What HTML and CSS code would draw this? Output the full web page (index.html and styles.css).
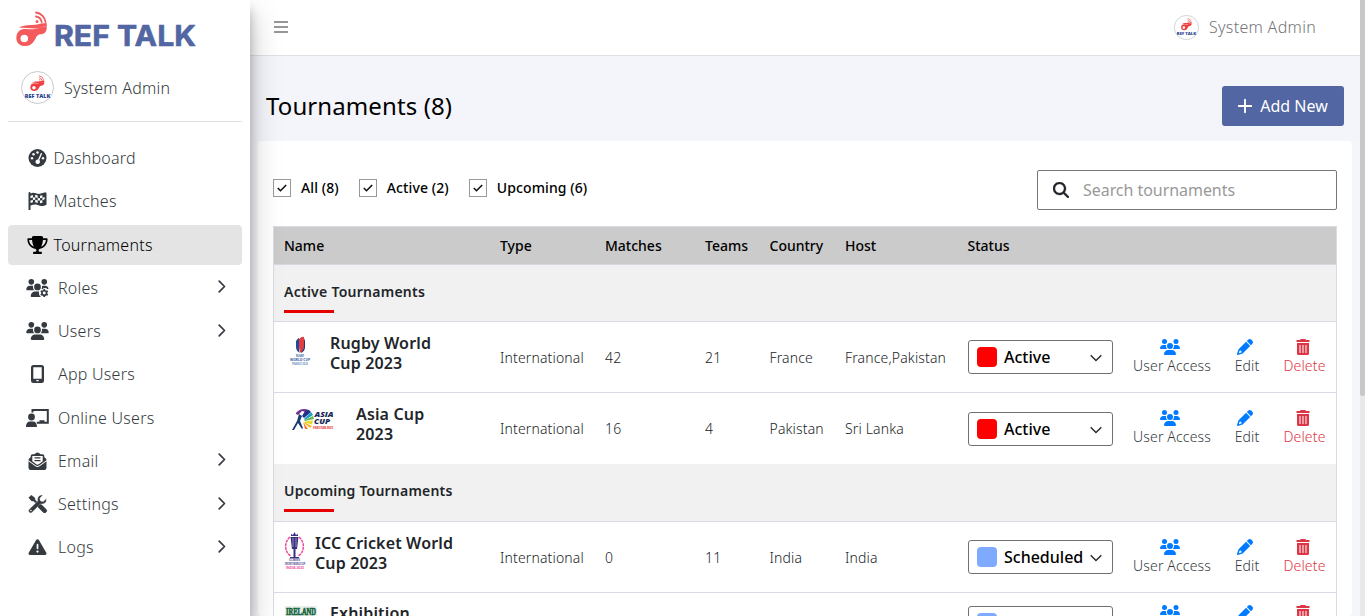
FILE: index.html
```html
<!DOCTYPE html>
<html lang="en">
<head>
<meta charset="utf-8">
<title>Ref Talk - Tournaments</title>
<link rel="stylesheet" href="styles.css">
</head>
<body>
<svg class="sprite" aria-hidden="true">
  <symbol id="whistle" viewBox="0 0 32 37">
    <path d="M3 16.500C8 13.500 15 14.500 21 13.500c3-.5 5-1.500 9.500-1.500l.5 3C25 16 24 17.500 19 17.500 13 17.500 8 16.500 3 16.500z"/>
    <path fill-rule="evenodd" d="M.5 25.500c.5-5.500 4.500-8 10-7.500 6 .6 10 .2 14-1.500l6-1.500c.8 3.500-.5 7-4 8-2.500.5-4 0-6 2.500-2 4.500-4.500 9-10.500 9.500C3.500 35.500-.5 31 .5 25.500zm4 2a3.800 3.800 0 1 0 7.600 0 3.800 3.800 0 1 0-7.600 0z"/>
    <g fill="none" stroke="#f4595b" stroke-width="1.800" stroke-linecap="round"><path d="M20 1.500a11 11 0 0 1 9.500 9.500M20 5.500a7 7 0 0 1 5.700 5.700"/></g>
    <circle cx="21" cy="10.500" r="1.500"/>
  </symbol>
  <symbol id="avatar" viewBox="0 0 33 33">
    <circle cx="16.500" cy="16.500" r="16" fill="#fff" stroke="#c5c8cc"/>
    <use href="#whistle" x="9" y="4" width="15" height="17" fill="#ef3e3e"/>
    <text x="3.800" y="27" textLength="25.500" lengthAdjust="spacingAndGlyphs" font-family="Open Sans, sans-serif" font-weight="800" font-size="5.500" fill="#29418f">REF TALK</text>
  </symbol>
  <symbol id="users" viewBox="0 0 640 512"><path d="M144 0a80 80 0 1 1 0 160A80 80 0 1 1 144 0zM512 0a80 80 0 1 1 0 160A80 80 0 1 1 512 0zM0 298.700C0 239.800 47.800 192 106.700 192h42.700c15.900 0 31 3.500 44.600 9.700c-1.300 7.200-1.900 14.700-1.900 22.300c0 38.200 16.800 72.500 43.300 96H21.300C9.600 320 0 310.400 0 298.700zM405.300 320c26-23.500 42.600-57.800 42.600-96c0-7.600-.7-15-1.900-22.300c13.600-6.300 28.700-9.700 44.600-9.700h42.700C592.200 192 640 239.800 640 298.700c0 11.800-9.600 21.300-21.300 21.300H405.300zM224 224a96 96 0 1 1 192 0 96 96 0 1 1-192 0zM128 485.300C128 411.700 187.700 352 261.300 352H378.700C452.300 352 512 411.700 512 485.300c0 14.700-11.900 26.700-26.700 26.700H154.700c-14.700 0-26.700-11.900-26.700-26.700z"/></symbol>
  <symbol id="users-gear" viewBox="0 0 640 512"><path d="M144 0a80 80 0 1 1 0 160A80 80 0 1 1 144 0zM512 0a80 80 0 1 1 0 160A80 80 0 1 1 512 0zM0 298.700C0 239.800 47.800 192 106.700 192h42.700c15.900 0 31 3.500 44.600 9.700c-1.300 7.200-1.900 14.700-1.900 22.300c0 38.200 16.800 72.500 43.300 96H21.300C9.600 320 0 310.400 0 298.700zM435 280c20-26 15-60 11-78c14-6 29-10 45-10h43c50 0 91 34 103 79l-30 18c-40-45-110-45-150 0zM224 224a96 96 0 1 1 192 0 96 96 0 1 1-192 0zM128 485c0-74 60-133 133-133H365c-15 60 5 120 55 160H155c-15 0-27-12-27-27z"/><circle cx="512" cy="400" r="63" fill="none" stroke="currentColor" stroke-width="52"/><path d="M512 284v232M412 342l200 116M412 458l200-116" fill="none" stroke="currentColor" stroke-width="48"/><circle cx="512" cy="400" r="42" fill="#fff"/></symbol>
  <symbol id="trophy" viewBox="0 0 576 512"><path d="M400 0H176c-26.500 0-48.100 21.800-47.100 48.200c.2 5.300.4 10.600.7 15.800H24C10.700 64 0 74.700 0 88c0 92.600 33.500 157 78.500 200.700c44.300 43.100 98.300 64.800 138.100 75.800c23.400 6.500 39.400 26 39.400 45.600c0 20.900-17 37.900-37.900 37.900H192c-17.700 0-32 14.300-32 32s14.300 32 32 32H384c17.700 0 32-14.300 32-32s-14.300-32-32-32H357.900C337 448 320 431 320 410.100c0-19.600 15.900-39.200 39.400-45.600c39.900-11 93.900-32.700 138.200-75.800C542.500 245 576 180.600 576 88c0-13.300-10.700-24-24-24H446.400c.3-5.200.5-10.400.7-15.800C448.100 21.800 426.500 0 400 0zM48.900 112h84.400c9.100 90.100 29.200 150.300 51.900 190.600c-24.900-11-50.800-26.500-73.200-48.300c-32-31.100-58-76-63-142.300zM464.100 254.300c-22.400 21.800-48.300 37.300-73.200 48.300c22.700-40.300 42.800-100.500 51.900-190.600h84.400c-5.100 66.300-31.100 111.200-63 142.300z"/></symbol>
  <symbol id="gauge" viewBox="0 0 18 18"><circle cx="9" cy="9" r="9"/><g fill="#fff"><circle cx="3.500" cy="9.300" r="1.200"/><circle cx="5" cy="5.200" r="1.200"/><circle cx="9" cy="3.500" r="1.200"/><circle cx="14.500" cy="9.300" r="1.200"/><path d="M12.300 4.200a.7.700 0 0 1 1.200.6L10.800 11a2.300 2.300 0 1 1-1.300-.6z"/></g></symbol>
  <symbol id="flag" viewBox="0 0 18 18"><path fill-rule="evenodd" d="M0 1a1 1 0 0 1 2 0v.5C6-.5 8 2.500 11.500 1.800 14 1.200 16.500.2 18 .8v11.900c-4 2.200-6.500 1-9 .2-2.500-.9-4.500-.2-7 .7V18H0zM2 3.700v2.500l2.400-.7V3zm4.700-.9v2.400l2.500.8V3.500zm4.800 1v2.500l2.400-.6V3.300zM4.400 5.500V8l2.300-.2V5.200zM9.200 6v2.500h2.300V6.300zm4.700-.3v2.500l2.200-.9V4.900zM2 8.500V11l2.400-.8V8zm4.700-.7v2.400l2.500.7V8.500zm4.800.7v2.700l2.400-.4V8.200z"/></symbol>
  <symbol id="mobile" viewBox="0 0 14 18"><path fill-rule="evenodd" d="M3 0h8a2.500 2.500 0 0 1 2.500 2.500v13A2.500 2.500 0 0 1 11 18H3a2.500 2.500 0 0 1-2.500-2.500v-13A2.500 2.500 0 0 1 3 0zm-.2 2.200v11.500h8.400V2.200zm3 12.700v1.400h2.400v-1.400z"/></symbol>
  <symbol id="board" viewBox="0 0 23 18"><path d="M6.500 3.500V1h15.300v12.800h-11" fill="none" stroke="currentColor" stroke-width="2"/><circle cx="5.500" cy="8" r="3.400"/><path d="M0 18c0-4 2-5.500 4-5.500h3c2.500 0 4 2 4 5.500zM13.500 11.300h5v2.500h-5z"/></symbol>
  <symbol id="mail" viewBox="0 0 18 18"><path fill-rule="evenodd" d="M0 8.200c0-1 .4-1.700 1.200-2.200l1-.7V4c0-1 .8-1.800 1.800-1.800h2L7.500 1a2.500 2.500 0 0 1 3 0L12 2.200h2c1 0 1.800.8 1.800 1.800v1.300l1 .7c.8.500 1.200 1.200 1.200 2.200l-7 5.100a3.400 3.400 0 0 1-4 0zM3.800 4v5.200l4 3a2 2 0 0 0 2.400 0l4-3V4z"/><path d="M6 5.300h6v1.300H6zM6 7.900h6v1.300H6zM0 9.200l6.500 4.900a4 4 0 0 0 5 0L18 9.200v6.600a2.200 2.200 0 0 1-2.200 2.200H2.200A2.200 2.200 0 0 1 0 15.800z"/></symbol>
  <symbol id="tools" viewBox="0 0 18 18"><path d="M.3 2.700L2.700.3l3.500 2.500.3 2 4.700 4.700 1.300-.2 5 5a1.700 1.700 0 0 1-2.800 2.800l-5-5 .1-1.400-4.700-4.600-2-.2z" stroke="currentColor" stroke-width=".5"/><path d="M17.700 3.600l-3 3-2.700-.7-.7-2.700 3-3C10.500-.8 8.300 3 9.200 5.900L.7 14.300a2.100 2.100 0 0 0 3 3l8.400-8.400c3 .9 6.700-1.300 5.600-5.300z" stroke="#fff" stroke-width=".4"/><path d="M9.800 10.400l2.700-1 5 5a1.700 1.700 0 0 1-2.800 2.800l-5-5z"/><circle cx="2.400" cy="15.500" r=".8" fill="#fff"/></symbol>
  <symbol id="warn" viewBox="0 0 512 512"><path fill-rule="evenodd" d="M256 32c14.200 0 27.300 7.500 34.500 19.800l216 368c7.300 12.400 7.300 27.700.2 40.100S486.300 480 472 480H40c-14.300 0-27.600-7.700-34.700-20.100s-7-27.800.2-40.100l216-368C228.700 39.500 241.800 32 256 32zm0 128c-13.300 0-24 10.700-24 24V296c0 13.300 10.700 24 24 24s24-10.700 24-24V184c0-13.300-10.700-24-24-24zm32 224a32 32 0 1 0-64 0 32 32 0 1 0 64 0z"/></symbol>
  <symbol id="right" viewBox="0 0 8 13"><path d="M1.200 1.200l5.300 5.300-5.300 5.300" fill="none" stroke="currentColor" stroke-width="1.700" stroke-linecap="round" stroke-linejoin="round"/></symbol>
  <symbol id="down" viewBox="0 0 12 8"><path d="M.7 1.200L6 6.500l5.300-5.300" fill="none" stroke="#212529" stroke-width="1.300"/></symbol>
  <symbol id="pencil" viewBox="0 0 512 512"><path d="M362.700 19.300L314.300 67.700 444.300 197.700l48.400-48.400c25-25 25-65.500 0-90.500L453.300 19.300c-25-25-65.500-25-90.500 0zM291.700 90.300L58.600 323.500c-10.400 10.400-18 23.300-22.200 37.400L1 481.200C-1.500 489.700.8 498.800 7 505s15.300 8.500 23.700 6.100l120.300-35.400c14.100-4.200 27-11.800 37.400-22.200L421.700 220.300zM59.400 452l23-78.100L112 352v32c0 8.800 7.200 16 16 16h32l-22.400 29.600z" fill-rule="evenodd"/></symbol>
  <symbol id="trash" viewBox="0 0 14 16"><path fill-rule="evenodd" d="M4.200.5L5 0h4l.8.500.3.5H13.500v2H.5V1h3.400zM1 4h12v10.500a1.500 1.500 0 0 1-1.500 1.500h-9A1.500 1.500 0 0 1 1 14.500zm2.500 2v8h1V6zm3 0v8h1V6zm3 0v8h1V6z"/></symbol>
  <symbol id="search" viewBox="0 0 512 512"><path fill-rule="evenodd" d="M416 208c0 45.900-14.900 88.300-40 122.700L502.600 457.400c12.500 12.500 12.500 32.800 0 45.300s-32.800 12.500-45.300 0L330.700 376c-34.400 25.200-76.800 40-122.700 40C93.100 416 0 322.900 0 208S93.100 0 208 0S416 93.100 416 208zM208 352a144 144 0 1 0 0-288 144 144 0 1 0 0 288z" stroke="currentColor" stroke-width="10"/></symbol>
</svg>

<div class="app">
  <aside class="sidebar">
    <div class="brand">
      <svg class="brand-logo" viewBox="0 0 184 40">
        <use href="#whistle" x="0" y="0" width="32" height="37" fill="#f4595b"/>
        <text class="wordmark" x="38" y="35" textLength="142" lengthAdjust="spacingAndGlyphs">REF TALK</text>
      </svg>
    </div>
    <div class="profile"><svg class="face"><use href="#avatar"/></svg><span>System Admin</span></div>
    <nav class="menu">
      <a class="item tight"><svg class="ico"><use href="#gauge"/></svg><span>Dashboard</span></a>
      <a class="item tight"><svg class="ico"><use href="#flag"/></svg><span>Matches</span></a>
      <a class="item tight active"><svg class="ico"><use href="#trophy"/></svg><span>Tournaments</span></a>
      <a class="item"><svg class="ico"><use href="#users-gear"/></svg><span>Roles</span><svg class="arrow"><use href="#right"/></svg></a>
      <a class="item"><svg class="ico"><use href="#users"/></svg><span>Users</span><svg class="arrow"><use href="#right"/></svg></a>
      <a class="item"><svg class="ico"><use href="#mobile"/></svg><span>App Users</span></a>
      <a class="item"><svg class="ico"><use href="#board"/></svg><span>Online Users</span></a>
      <a class="item"><svg class="ico"><use href="#mail"/></svg><span>Email</span><svg class="arrow"><use href="#right"/></svg></a>
      <a class="item"><svg class="ico"><use href="#tools"/></svg><span>Settings</span><svg class="arrow"><use href="#right"/></svg></a>
      <a class="item"><svg class="ico"><use href="#warn"/></svg><span>Logs</span><svg class="arrow"><use href="#right"/></svg></a>
    </nav>
  </aside>

  <div class="page">
    <header class="topbar">
      <svg class="burger" viewBox="0 0 14 12"><path d="M0 1h14M0 6h14M0 11h14" stroke="#737578" stroke-width="1.600"/></svg>
      <div class="account"><svg class="face small"><use href="#avatar"/></svg><span>System Admin</span></div>
    </header>
    <div class="heading">
      <h1>Tournaments (8)</h1>
      <button class="add"><svg viewBox="0 0 14 14"><path d="M7 .8v12.400M.8 7h12.400" stroke="#fff" stroke-width="1.900" stroke-linecap="round"/></svg>Add New</button>
    </div>
    <main class="panel">
      <div class="toolbar">
        <div class="filters">
          <label><i class="box"><svg viewBox="0 0 10 8"><path d="M.8 4l2.700 2.700L9.200 1" fill="none" stroke="#111" stroke-width="1.600"/></svg></i>All (8)</label>
          <label><i class="box"><svg viewBox="0 0 10 8"><path d="M.8 4l2.700 2.700L9.200 1" fill="none" stroke="#111" stroke-width="1.600"/></svg></i>Active (2)</label>
          <label><i class="box"><svg viewBox="0 0 10 8"><path d="M.8 4l2.700 2.700L9.200 1" fill="none" stroke="#111" stroke-width="1.600"/></svg></i>Upcoming (6)</label>
        </div>
        <div class="search"><svg><use href="#search"/></svg><span>Search tournaments</span></div>
      </div>

      <div class="table">
        <div class="row head"><span>Name</span><span>Type</span><span>Matches</span><span>Teams</span><span>Country</span><span>Host</span><span>Status</span></div>
        <div class="group"><b>Active Tournaments</b></div>
        <div class="row">
          <div class="name">
            <svg class="crest rugby" viewBox="0 0 32 32">
              <path d="M12 5q2-3 3-3v11q0 4 2 4-5-1-5-6z" fill="#24499a"/><path d="M15 3q3-3 5-2v8q0 5-3 8-2-2-2-6z" fill="#e43d3d"/><path d="M20 2l1 3v6q0 4-4 6 3-4 3-8z" fill="#24356f"/>
              <g font-family="Open Sans, sans-serif" font-weight="700" fill="#315b9d" text-anchor="middle"><text x="16" y="20.800" font-size="3" textLength="8" lengthAdjust="spacingAndGlyphs">RUGBY</text><text x="16" y="25" font-size="3" textLength="20" lengthAdjust="spacingAndGlyphs">WORLD CUP</text><text x="16" y="29.200" font-size="3" fill="#6b91c0" textLength="16" lengthAdjust="spacingAndGlyphs">FRANCE 2023</text></g>
            </svg>
            <h2>Rugby World<br>Cup 2023</h2>
          </div>
          <span>International</span><span>42</span><span>21</span><span>France</span><span>France,Pakistan</span>
          <div class="status"><i class="dot red"></i><b>Active</b><svg><use href="#down"/></svg></div>
          <div class="actions"><a><svg class="w20"><use href="#users"/></svg>User Access</a><a><svg><use href="#pencil"/></svg>Edit</a><a class="del"><svg><use href="#trash"/></svg>Delete</a></div>
        </div>
        <div class="row no-line">
          <div class="name">
            <svg class="crest asia" viewBox="0 0 46 24">
              <path d="M4 5q5-6 13-3l-3 2-4-1-4 4-2-1z" fill="#71318c"/><path d="M7 6l3 2-2 5 3 7-1 1-4-6-4 7H0l5-9z" fill="#173c70"/><path d="M10 8l3-5 4-1 2 2-7 6z" fill="#25308b"/><path d="M12 11l7-7 2 3-8 5z" fill="#1ba0c8"/><path d="M12 12.500l9-4.500 1 3-9 2z" fill="#67b84c"/><path d="M13 13.500l8-1-1 4-7-2z" fill="#e4d92f"/><path d="M12 14l8 4-2 2-6-5z" fill="#fdb827"/><path d="M11 14l5 7-3 0z" fill="#f47b30"/>
              <g font-family="Open Sans, sans-serif" font-weight="800" font-style="italic" fill="#152755"><text x="22.500" y="8.500" font-size="7.500" textLength="19" lengthAdjust="spacingAndGlyphs">ASIA</text><text x="22" y="16" font-size="7.500" textLength="16" lengthAdjust="spacingAndGlyphs">CUP</text><text x="21" y="20.500" font-size="2.800" fill="#e64a4a" textLength="20" lengthAdjust="spacingAndGlyphs">PAKISTAN 2023</text></g>
            </svg>
            <h2>Asia Cup<br>2023</h2>
          </div>
          <span>International</span><span>16</span><span>4</span><span>Pakistan</span><span>Sri Lanka</span>
          <div class="status low"><i class="dot red"></i><b>Active</b><svg><use href="#down"/></svg></div>
          <div class="actions"><a><svg class="w20"><use href="#users"/></svg>User Access</a><a><svg><use href="#pencil"/></svg>Edit</a><a class="del"><svg><use href="#trash"/></svg>Delete</a></div>
        </div>
        <div class="group second"><b>Upcoming Tournaments</b></div>
        <div class="row">
          <div class="name">
            <svg class="crest icc" viewBox="0 0 22 38">
              <path d="M6 5C0 10 0 20 7 24M15 5c6 5 6 15-1 19" fill="none" stroke="#ee4b9b" stroke-width="1.500" stroke-dasharray="3 .7"/><path d="M7 4V2l2 1 1.500-3L12 3l2-1v2zM6.500 5h8l-1.500 12h-1.500v8h-2v-8H8z" fill="#39317f"/><path d="M9 6v9M12 6v9" stroke="#b4a7d1" stroke-width=".8"/><path d="M6 25h9v1.200H6z" fill="#39317f"/>
              <g font-family="Open Sans, sans-serif" font-weight="700" font-size="2.700" text-anchor="middle" fill="#39317f"><text x="10.500" y="29.300" textLength="11" lengthAdjust="spacingAndGlyphs">ICC MEN'S</text><text x="11" y="32.900" textLength="20.500" lengthAdjust="spacingAndGlyphs">CRICKET WORLD CUP</text><text x="11" y="36.700" textLength="18" lengthAdjust="spacingAndGlyphs" fill="#ee4b9b">INDIA 2023</text></g>
            </svg>
            <h2>ICC Cricket World<br>Cup 2023</h2>
          </div>
          <span>International</span><span>0</span><span>11</span><span>India</span><span>India</span>
          <div class="status"><i class="dot blue"></i><b>Scheduled</b><svg><use href="#down"/></svg></div>
          <div class="actions"><a><svg class="w20"><use href="#users"/></svg>User Access</a><a><svg><use href="#pencil"/></svg>Edit</a><a class="del"><svg><use href="#trash"/></svg>Delete</a></div>
        </div>
        <div class="row last">
          <div class="name">
            <svg class="crest ireland" viewBox="0 0 32 32"><path d="M0 0h32v32H0z" fill="#e8efe9"/><text x="1" y="8.500" font-family="Liberation Serif, serif" font-weight="700" font-size="11" textLength="30" lengthAdjust="spacingAndGlyphs" fill="#14633d" stroke="#14633d" stroke-width=".7">IRELAND</text></svg>
            <h2>Exhibition</h2>
          </div>
          <span></span><span></span><span></span><span></span><span></span>
          <div class="status"><i class="dot blue"></i><svg><use href="#down"/></svg></div>
          <div class="actions"><a><svg class="w20"><use href="#users"/></svg></a><a><svg><use href="#pencil"/></svg></a><a class="del"><svg><use href="#trash"/></svg></a></div>
        </div>
      </div>
    </main>
  </div>
  <div class="scroll"><div class="thumb"></div></div>
</div>
</body>
</html>
```

FILE: styles.css
```css
* { box-sizing: border-box; }
body { margin: 0; overflow: hidden; font: 300 14px/21px "Noto Sans", sans-serif; letter-spacing: .15px; color: #212529; background: #f4f6f9; }
svg { display: block; fill: currentColor; flex: none; overflow: visible; letter-spacing: 0; }
.sprite { display: none; }
.app { display: flex; height: 616px; overflow: hidden; }

.sidebar { flex: none; width: 250px; padding: 0 8px; background: #fff; box-shadow: 0 14px 28px rgba(0,0,0,.25), 0 10px 10px rgba(0,0,0,.22); z-index: 2; color: #343a40; font-size: 16px; line-height: 24px; letter-spacing: .25px; }
.brand { height: 60px; padding: 11px 0 0 8px; }
.brand-logo { width: 184px; height: 40px; }
.wordmark { font: 700 29px/30px "Inter", sans-serif; fill: #5166a2; stroke: #5166a2; stroke-width: .6px; stroke-linejoin: round; }
.profile { display: flex; align-items: center; gap: 10px; height: 62px; padding: 0 0 6px 13px; border-bottom: 1px solid #dee2e6; }
.face { width: 33px; height: 33px; }
.face.small { width: 25px; height: 25px; }
.menu { padding-top: 16px; }
.item { display: flex; align-items: center; height: 40px; margin-bottom: 3.250px; padding: 0 16px 0 18px; border-radius: 4px; }
.ico { width: 23px; height: 18px; margin-right: 9px; }
.tight .ico { margin-right: 4.500px; }
.active { background: #e4e4e4; color: #000; }
.arrow { width: 8px; height: 13px; margin-left: auto; margin-bottom: 2px; }

.page { flex: 1; min-width: 0; display: flex; flex-direction: column; }
.topbar { flex: none; height: 56px; padding: 0 44px 1px 24px; display: flex; align-items: center; justify-content: space-between; background: #fff; border-bottom: 1px solid #dee2e6; }
.burger { width: 14px; height: 12px; }
.account { display: flex; align-items: center; gap: 10px; font-size: 16px; letter-spacing: .3px; color: #737578; }
.heading { flex: none; height: 85px; padding: 15px 16px 0 16px; display: flex; align-items: center; justify-content: space-between; background: #f4f5fa; }
h1 { margin: 0; font-size: 24px; line-height: 30px; font-weight: 400; letter-spacing: .1px; color: #000; }
.add { display: flex; align-items: center; justify-content: center; gap: 8px; width: 122px; height: 40px; border: 0; border-radius: 3px; background: #5166a2; color: #fff; font: 400 16px "Noto Sans", sans-serif; }
.add svg { width: 14px; height: 14px; }

.panel { flex: 1; min-height: 0; margin: 0 8px; padding: 29px 15px 0; background: #fff; border-radius: 4px; }
.toolbar { display: flex; justify-content: space-between; height: 56px; }
.filters { display: flex; gap: 20px; padding-top: 7px; font-weight: 500; letter-spacing: .1px; color: #000; }
.filters label { display: flex; gap: 10px; height: 21px; align-items: center; }
.box { width: 18px; height: 18px; border: 1px solid #999; display: grid; place-items: center; }
.box svg { width: 10px; height: 8px; }
.search { display: flex; align-items: center; gap: 14px; width: 300px; height: 40px; padding-left: 15px; border: 1px solid #777; border-radius: 2px; font-size: 16px; color: #999; font-weight: 400; letter-spacing: -.05px; }
.search svg { width: 16px; height: 16px; color: #212529; }

.table { border: 1px solid #dadce4; width: 1064px; }
.row { display: grid; grid-template-columns: 216px 105px 100px 64.500px 75.500px 122.500px 165.500px 1fr; align-items: center; height: 71px; padding-left: 10px; border-bottom: 1px solid #dadaea; }
.row.no-line { border-color: #fff; }
.row.head { height: 38px; background: #cbcbcb; border-color: #d6d8df; font-weight: 500; letter-spacing: 0; color: #000; }
.group { height: 57px; padding: 17px 10px 0; background: #f1f1f1; border-bottom: 1px solid #dadce4; letter-spacing: .26px; }
.group.second { height: 58px; letter-spacing: .2px; }
.group b { display: block; font-weight: 600; line-height: 20px; }
.group b::after { content: ""; display: block; width: 50px; height: 3px; margin-top: 8px; background: #e60000; }
.name { display: flex; align-items: flex-start; height: 48px; }
h2 { margin: 0; padding-top: 1px; font-size: 16px; line-height: 19.500px; font-weight: 600; letter-spacing: .15px; }
.crest { margin-right: 14px; }
.rugby { width: 32px; height: 32px; margin-top: 3px; }
.asia { width: 46px; height: 24px; margin: 4px 18px 0 8px; }
.icc { width: 22px; height: 38px; margin: -1px 9px 0 0; }
.ireland { width: 32px; height: 32px; margin: 3px 13px 0 1px; }
.status { display: flex; align-items: center; width: 145px; height: 34px; padding: 0 10px 0 8px; border: 1px solid #707070; border-radius: 3px; font-size: 16px; letter-spacing: 0; color: #000; }
.status.low { margin-top: 2px; }
.status b { font-weight: 500; }
.status svg { width: 12px; height: 8px; margin-left: auto; margin-top: 2px; }
.dot { width: 20px; height: 20px; border-radius: 4px; margin-right: 7.500px; }
.dot.red { background: #f00; }
.dot.blue { background: #7eaaff; }
.actions { display: grid; grid-template-columns: 78px 26px 43px; column-gap: 23px; color: #343a40; }
.actions a { display: flex; flex-direction: column; align-items: center; line-height: 20px; white-space: nowrap; }
.actions svg { width: 16px; height: 16px; margin: 0 4px 1px 0; color: #007bff; }
.actions .w20 { width: 20px; }
.actions .del, .actions .del svg { color: #dc3545; }
.row.last { height: 60px; }
.last .name { height: 39px; }
.last .actions { padding-bottom: 19px; }

.scroll { flex: none; width: 5px; background: #e9e9e9; }
.thumb { height: 396px; background: #c8c8c8; border-radius: 0 0 3px 3px; }
```
